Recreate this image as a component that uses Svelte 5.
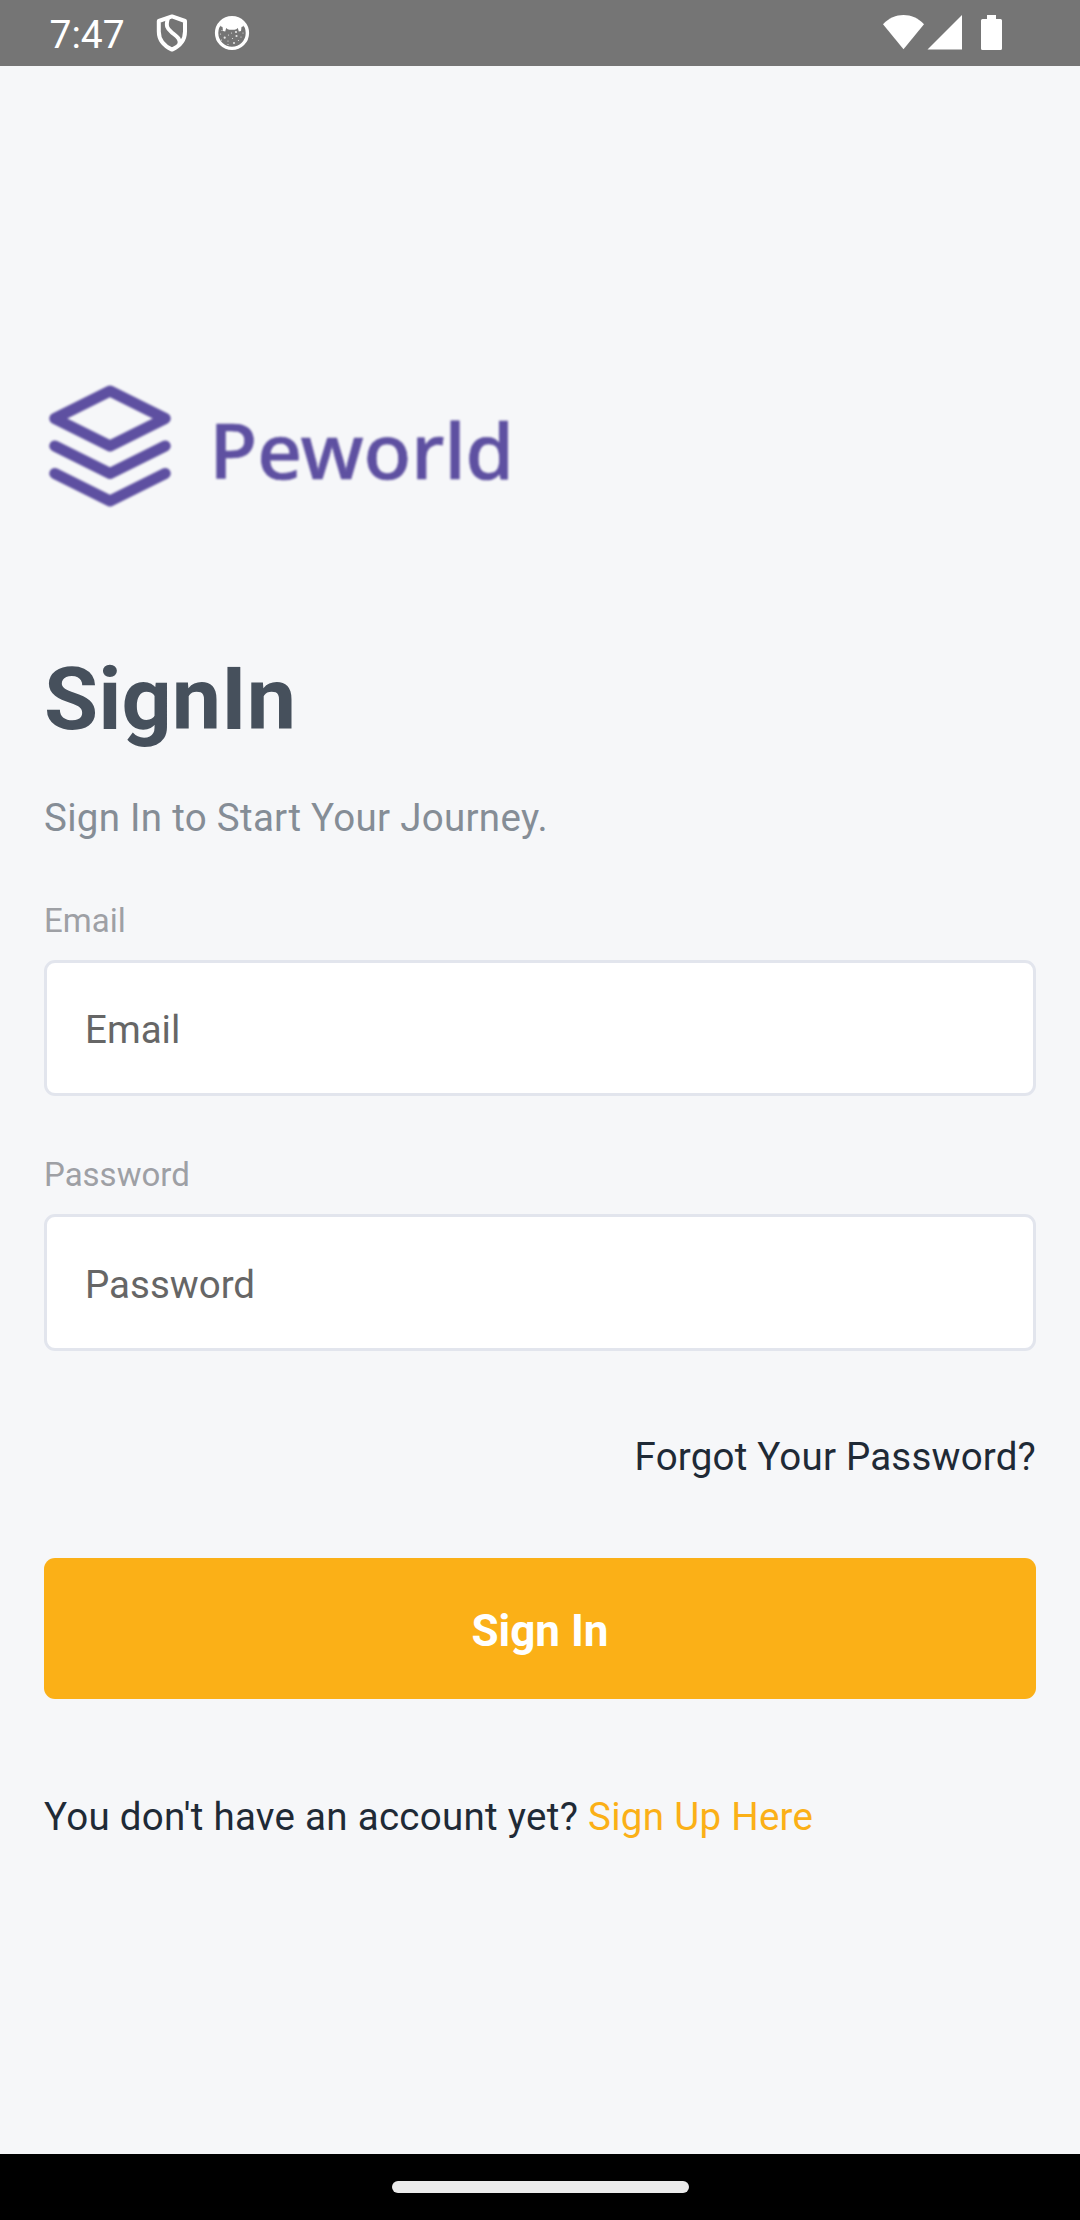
<script>
  let email = $state('');
  let password = $state('');

  // Speckles on the round notification icon: x, y, radius
  const dots = [
    [6.5, 19, 0.6], [10.7, 22.7, 1.1], [8, 15.5, 0.6], [14, 26, 0.6], [14.5, 20, 0.6],
    [17.5, 18, 0.6], [18.5, 23.5, 0.6], [20, 28, 1], [22.5, 21, 1.1], [24.5, 25.5, 0.6],
    [27, 22, 0.6], [29, 18, 0.6], [14, 29.5, 0.6], [22, 17, 1.1], [7.5, 25, 0.6]
  ];
</script>

<div class="screen">
  <header class="status">
    <span class="time">7:47</span>
    <svg class="shield" width="32" height="38" viewBox="0 0 32 38" fill="none" stroke="#fff" stroke-width="4" stroke-linejoin="round">
      <path d="M16 2.400 2.800 7v10.500c0 8 5 14.300 13.200 18.100 8.200-3.800 13-10.100 13-18.100V7z" />
      <path d="M12 4c-2.500 8-1 10.500 3.800 14.500 6.200 5 8.700 6.500 7.700 12" />
    </svg>
    <svg class="face" width="36" height="36" viewBox="0 0 36 36">
      <circle cx="18" cy="18" r="15.400" fill="none" stroke="#fff" stroke-width="3.400" />
      <path fill="#fff" d="M6 11C10 1 26 1 30 11l-2.500 1-.5 4-2.200.5-1-3.500q-1.300 1.800-3.300 1.800h-5q-2 0-3.300-1.800l-1 3.500L9 16l-.5-4z" />
      {#each dots as [x, y, r]}
        <circle cx={x} cy={y} {r} fill="#e4e4e4" />
      {/each}
    </svg>
    <svg class="signals" width="122" height="38" viewBox="0 0 122 38" fill="#fff">
      <path d="M1 10.200C12.500-2 30.500-2 42 10.200L21.500 35.300z" />
      <path d="M45.500 35.500 80 1v34.500z" />
      <path d="M105 1h9v4h4.500q1.500 0 1.500 1.500v28q0 1.500-1.500 1.500h-18q-1.500 0-1.500-1.500v-28q0-1.500 1.500-1.500h4.500z" />
    </svg>
  </header>

  <main>
    <svg class="logo" width="480" height="150" viewBox="0 0 480 150" role="img" aria-label="Peworld">
      <g fill="none" stroke="#5e50a1" stroke-width="11" stroke-linecap="round" stroke-linejoin="round">
        <path d="M66 21 10.800 48.500 66 76l55.200-27.500z" />
        <path d="M10.800 76 66 103.500 121.200 76" />
        <path d="M10.800 103.500 66 131l55.200-27.500" />
      </g>
      <text x="165.500" y="108.700" textLength="304.500" lengthAdjust="spacingAndGlyphs">Peworld</text>
    </svg>

    <h1>SignIn</h1>
    <p class="sub">Sign In to Start Your Journey.</p>

    <label for="email">Email</label>
    <input id="email" type="email" placeholder="Email" bind:value={email} />

    <label class="second" for="password">Password</label>
    <input id="password" class="taller" type="password" placeholder="Password" bind:value={password} />

    <p class="forgot">Forgot Your Password?</p>
    <button type="button">Sign In</button>
    <p class="join">You don't have an account yet? <span>Sign Up Here</span></p>
  </main>

  <footer><div class="pill"></div></footer>
</div>

<style>
  :global(body) {
    margin: 0;
    background: #f6f7f8;
  }

  .screen {
    display: flex;
    flex-direction: column;
    width: 1080px;
    height: 2220px;
    background: #f6f7f9;
    font-family: Roboto, sans-serif;
    font-size: 38.5px;
    line-height: 46px;
    color: #1f2a36;
  }

  .status {
    display: flex;
    align-items: center;
    box-sizing: border-box;
    flex: none;
    height: 66px;
    padding: 0 76px 0 49.5px;
    background: #757575;
    color: #fff;
  }

  .time {
    width: 106.5px;
    padding-top: 3px;
    font-size: 39px;
  }

  .face {
    margin-left: 26px;
  }

  .signals {
    margin-left: auto;
  }

  main {
    display: flex;
    flex: 1;
    flex-direction: column;
    padding: 304px 44px 0;
  }

  .logo {
    flex: none;
    filter: blur(0.8px);
  }

  .logo text {
    font-family: 'Noto Sans', sans-serif;
    font-size: 76.6px;
    font-weight: 500;
    fill: #5e50a1;
    stroke: #5e50a1;
    stroke-width: 0.7px;
  }

  h1 {
    margin: 127px 0 44px;
    font-size: 88px;
    font-weight: 700;
    line-height: 104px;
    color: #46505c;
  }

  p {
    margin: 0;
    letter-spacing: 0.29px;
  }

  .sub {
    margin-bottom: 60px;
    color: #858d96;
  }

  label {
    margin-bottom: 19px;
    font-size: 33px;
    line-height: 40px;
    color: #9ea0a5;
  }

  .second {
    margin-top: 59px;
  }

  input {
    box-sizing: border-box;
    width: 100%;
    height: 136px;
    padding: 2px 38px 0;
    border: 3px solid #e2e5ed;
    border-radius: 11px;
    background: #fff;
    font: inherit;
    color: #1f2a36;
    outline: none;
  }

  input::placeholder {
    color: #666;
    opacity: 1;
  }

  .taller {
    height: 137px;
    padding-top: 4px;
  }

  .forgot {
    margin-top: 83px;
    text-align: right;
    letter-spacing: 0.2px;
  }

  button {
    height: 141px;
    margin: 78px 0 95px;
    padding: 4px 0 0;
    border: 0;
    border-radius: 11px;
    background: #fbb017;
    font-family: inherit;
    font-size: 44px;
    font-weight: 700;
    color: #fff;
  }

  .join span {
    color: #fbb017;
  }

  footer {
    display: flex;
    flex: none;
    align-items: center;
    justify-content: center;
    height: 66px;
    background: #000;
  }

  .pill {
    width: 297px;
    height: 12px;
    border-radius: 6px;
    background: #ebebeb;
  }
</style>
